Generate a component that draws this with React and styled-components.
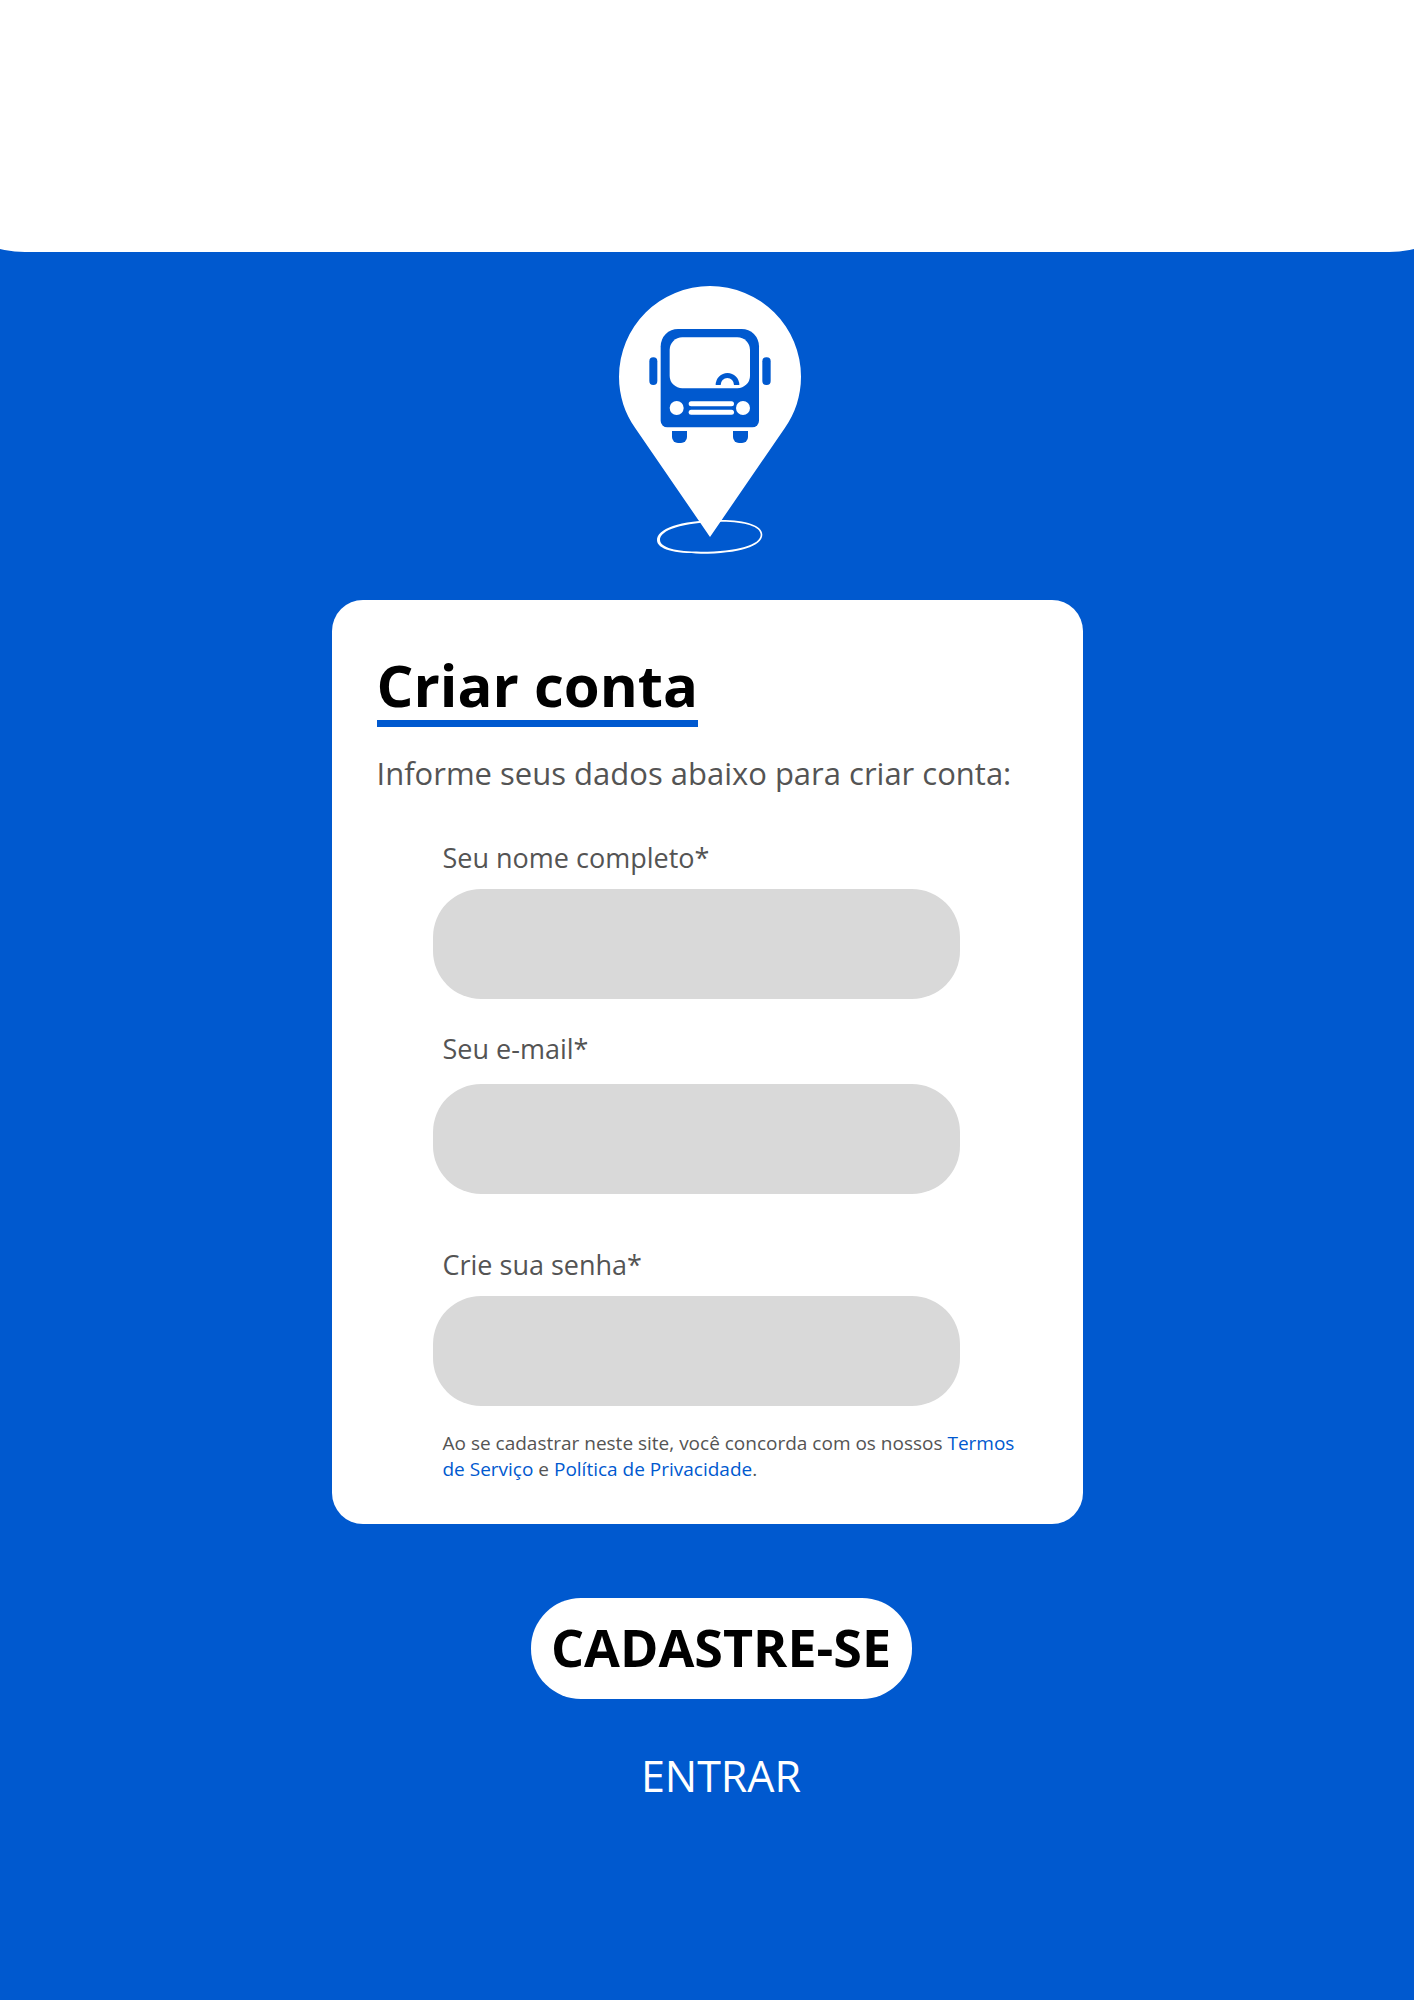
import React from "react";
import styled, { createGlobalStyle } from "styled-components";

const BLUE = "#0059cf";
const GREY_TEXT = "#545454";

const GlobalStyle = createGlobalStyle`
  *, *::before, *::after { box-sizing: border-box; }
  body {
    margin: 0;
    background: ${BLUE};
    font-family: "Open Sans", "Noto Sans", sans-serif;
  }
`;

const Page = styled.div`
  min-height: 100vh;
  overflow: hidden;
  background: ${BLUE};
`;

const TopBand = styled.header`
  height: 252px;
  margin: 0 -80px;
  border-radius: 0 0 105px 105px;
  background: #fff;
`;

const Main = styled.main`
  display: flex;
  flex-direction: column;
  align-items: center;
  padding: 34px 16px 48px;
`;

const Logo = styled.svg`
  display: block;
  width: 182px;
  height: 268px;
  margin: 0 0 46px 6px;
`;

const Form = styled.form`
  display: flex;
  flex-direction: column;
  align-items: center;
  width: 100%;
`;

const Card = styled.section`
  width: 100%;
  max-width: 751px;
  padding: 50px 45px 42px;
  border-radius: 31px;
  background: #fff;
  color: ${GREY_TEXT};
`;

const Title = styled.h1`
  width: fit-content;
  margin: 0 0 23px;
  border-bottom: 7px solid ${BLUE};
  color: #000;
  font-size: 58px;
  font-weight: 700;
  line-height: 70px;
`;

const Intro = styled.p`
  margin: 0 0 43px;
  font-size: 31px;
  line-height: 46px;
`;

const Fields = styled.div`
  padding-left: 56px;
`;

const Field = styled.div`
  display: flex;
  flex-direction: column;
  gap: ${({ $gap }) => $gap || 12}px;
  margin-bottom: ${({ $after }) => $after}px;
`;

const Label = styled.label`
  padding-left: 10px;
  font-size: 27px;
  line-height: 38px;
`;

const Input = styled.input`
  width: 100%;
  max-width: 527px;
  height: 110px;
  padding: 0 40px;
  border: 0;
  border-radius: 48px;
  background: #d9d9d9;
  color: #000;
  font: inherit;
  font-size: 27px;
`;

const Terms = styled.p`
  margin: 0;
  padding-left: 10px;
  font-size: 19px;
  line-height: 26px;
`;

const TermsLink = styled.a`
  color: ${BLUE};
  text-decoration: none;
`;

const Actions = styled.div`
  display: flex;
  flex-direction: column;
  align-items: center;
  gap: 48px;
  margin-top: 74px;
  padding-left: 28px;
`;

const SubmitButton = styled.button`
  min-width: 381px;
  height: 101px;
  padding: 0 20px 4px;
  border: 0;
  border-radius: 50px;
  background: #fff;
  color: #000;
  font: inherit;
  font-size: 52px;
  font-weight: 700;
  line-height: 70px;
  cursor: pointer;
`;

const LoginLink = styled.a`
  color: #fff;
  font-size: 43px;
  line-height: 58px;
  text-decoration: none;
`;

function BusPinLogo() {
  return (
    <Logo viewBox="57 48 546 804" role="img" aria-label="Ônibus">
      <path
        fill="#fff"
        d="M330 801 L105 473 C75 430 57 378 57 320 A273 272 0 0 1 603 320 C603 378 585 430 555 473 Z"
      />
      <g fill={BLUE}>
        <rect x="148" y="262" width="24" height="83" rx="12" />
        <rect x="487" y="262" width="25" height="83" rx="12" />
        <path d="M234 177 H425 A52 52 0 0 1 477 229 V452 A20 20 0 0 1 457 472 H202 A20 20 0 0 1 182 452 V229 A52 52 0 0 1 234 177 Z" />
        <path d="M216 483 H261 V501 A18 18 0 0 1 243 519 H234 A18 18 0 0 1 216 501 Z" />
        <path d="M399 483 H444 V501 A18 18 0 0 1 426 519 H417 A18 18 0 0 1 399 501 Z" />
      </g>
      <g fill="#fff">
        <rect x="209" y="202" width="241" height="153" rx="38" />
        <circle cx="230" cy="414" r="21" />
        <circle cx="429" cy="414" r="21" />
        <rect x="266" y="394" width="136" height="15" rx="7.5" />
        <rect x="266" y="419" width="136" height="15" rx="7.5" />
      </g>
      <path
        fill={BLUE}
        d="M347 345 A35.5 36 0 0 1 418 345 H402 A20 21 0 0 0 362 345 Z"
      />
      <path
        fill="#fff"
        fillRule="evenodd"
        d="M171 811 C170 778 236 750 362 750 C440 750 487 767 487 794 C487 828 417 851 303 851 C222 851 172 838 171 811 Z M180 810 C181 833 228 845 303 845 C413 845 482 824 482 794 C482 770 437 755 365 755 C245 756 179 781 180 810 Z"
      />
    </Logo>
  );
}

export default function App() {
  return (
    <>
      <GlobalStyle />
      <Page>
        <TopBand />
        <Main>
          <BusPinLogo />
          <Form onSubmit={(event) => event.preventDefault()}>
            <Card>
              <Title>Criar conta</Title>
              <Intro>Informe seus dados abaixo para criar conta:</Intro>
              <Fields>
                <Field $after={31}>
                  <Label htmlFor="nome">Seu nome completo*</Label>
                  <Input id="nome" type="text" autoComplete="name" required />
                </Field>
                <Field $gap={16} $after={52}>
                  <Label htmlFor="email">Seu e-mail*</Label>
                  <Input id="email" type="email" autoComplete="email" required />
                </Field>
                <Field $after={24}>
                  <Label htmlFor="senha">Crie sua senha*</Label>
                  <Input id="senha" type="password" autoComplete="new-password" required />
                </Field>
                <Terms>
                  Ao se cadastrar neste site, você concorda com os nossos{" "}
                  <TermsLink href="#termos">Termos de Serviço</TermsLink> e{" "}
                  <TermsLink href="#privacidade">Política de Privacidade</TermsLink>.
                </Terms>
              </Fields>
            </Card>
            <Actions>
              <SubmitButton type="submit">CADASTRE-SE</SubmitButton>
              <LoginLink href="#entrar">ENTRAR</LoginLink>
            </Actions>
          </Form>
        </Main>
      </Page>
    </>
  );
}
